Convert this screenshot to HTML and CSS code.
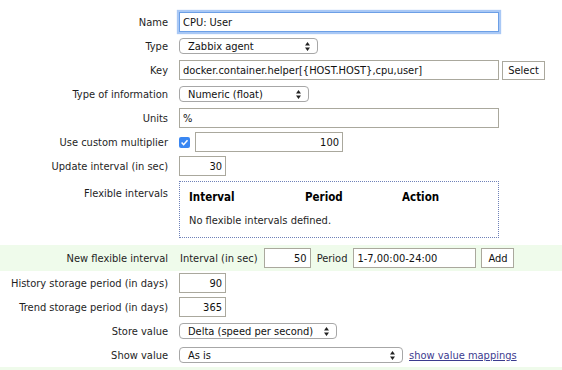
FILE: index.html
```html
<!DOCTYPE html>
<html>
<head>
<meta charset="utf-8">
<link rel="stylesheet" href="styles.css">
</head>
<body>
<div class="form">
  <div class="row">
    <div class="lbl">Name</div>
    <div class="ctl"><input class="inp w320 focus" value="CPU: User"></div>
  </div>
  <div class="row">
    <div class="lbl">Type</div>
    <div class="ctl"><div class="sel w139"><span>Zabbix agent</span><svg class="arr" width="5" height="9" viewBox="0 0 5 9"><path d="M2.5 0L5 3.5H0z M2.5 9L5 5.5H0z" fill="#222"/></svg></div></div>
  </div>
  <div class="row">
    <div class="lbl">Key</div>
    <div class="ctl"><input class="inp w320" value="docker.container.helper[{HOST.HOST},cpu,user]"><span class="btn btn-select">Select</span></div>
  </div>
  <div class="row">
    <div class="lbl">Type of information</div>
    <div class="ctl"><div class="sel w130"><span>Numeric (float)</span><svg class="arr" width="5" height="9" viewBox="0 0 5 9"><path d="M2.5 0L5 3.5H0z M2.5 9L5 5.5H0z" fill="#222"/></svg></div></div>
  </div>
  <div class="row">
    <div class="lbl">Units</div>
    <div class="ctl"><input class="inp w320" value="%"></div>
  </div>
  <div class="row">
    <div class="lbl">Use custom multiplier</div>
    <div class="ctl"><svg class="chk" width="11" height="11" viewBox="0 0 11 11"><rect x="0" y="0" width="11" height="11" rx="2" fill="#3a87f2"/><path d="M2.6 5.6L4.6 7.7L8.5 3.2" fill="none" stroke="#fff" stroke-width="1.5"/></svg><input class="inp w148 num" value="100"></div>
  </div>
  <div class="row">
    <div class="lbl">Update interval (in sec)</div>
    <div class="ctl"><input class="inp w47 num" value="30"></div>
  </div>
  <div class="row row-flex">
    <div class="lbl lbl-top">Flexible intervals</div>
    <div class="ctl">
      <div class="flexbox">
        <div class="fhead"><span class="h1">Interval</span><span class="h2">Period</span><span class="h3">Action</span></div>
        <div class="fmsg">No flexible intervals defined.</div>
      </div>
    </div>
  </div>
  <div class="row row-new">
    <div class="lbl">New flexible interval</div>
    <div class="ctl"><span class="txt t-int">Interval (in sec)</span><input class="inp w47 num" value="50"><span class="txt t-per">Period</span><input class="inp w123" value="1-7,00:00-24:00"><span class="btn btn-add">Add</span></div>
  </div>
  <div class="row">
    <div class="lbl">History storage period (in days)</div>
    <div class="ctl"><input class="inp w47 num" value="90"></div>
  </div>
  <div class="row">
    <div class="lbl">Trend storage period (in days)</div>
    <div class="ctl"><input class="inp w47 num" value="365"></div>
  </div>
  <div class="row">
    <div class="lbl">Store value</div>
    <div class="ctl"><div class="sel w158"><span>Delta (speed per second)</span><svg class="arr" width="5" height="9" viewBox="0 0 5 9"><path d="M2.5 0L5 3.5H0z M2.5 9L5 5.5H0z" fill="#222"/></svg></div></div>
  </div>
  <div class="row">
    <div class="lbl">Show value</div>
    <div class="ctl"><div class="sel w224"><span>As is</span><svg class="arr" width="5" height="9" viewBox="0 0 5 9"><path d="M2.5 0L5 3.5H0z M2.5 9L5 5.5H0z" fill="#222"/></svg></div><a class="link" href="#">show value mappings</a></div>
  </div>
  <div class="row row-new row-tail"></div>
</div>
</body>
</html>
```
FILE: styles.css
```css
html, body {
  margin: 0;
  padding: 0;
  background: #fff;
}
body {
  font-family: "DejaVu Sans Condensed", "DejaVu Sans", sans-serif;
  font-size: 11px;
  color: #1e1e1e;
}
.form {
  padding-top: 10px;
}
.row {
  display: grid;
  grid-template-columns: 168px 1fr;
  column-gap: 11px;
  align-items: center;
  height: 24px;
}
.lbl {
  text-align: right;
  white-space: nowrap;
}
.ctl {
  display: flex;
  align-items: center;
}
.inp {
  box-sizing: border-box;
  height: 20px;
  border: 1px solid #aaa89d;
  padding: 0 3px;
  font-family: inherit;
  font-size: 11px;
  color: #111;
  background: #fff;
  margin: 0;
  outline: none;
}
.num { text-align: right; }
.focus {
  border-color: #6c9fe6;
  box-shadow: 0 0 1px 2px #a9c8f5;
  height: 20px;
}
.w320 { width: 320px; }
.w148 { width: 148px; }
.w47 { width: 47px; }
.w123 { width: 123px; }
.w139 { width: 139px; }
.w130 { width: 130px; }
.w158 { width: 158px; }
.w224 { width: 224px; }
.sel {
  box-sizing: border-box;
  height: 16px;
  border: 1px solid #a7a7a7;
  border-radius: 4px;
  padding: 0 7px 0 8px;
  display: flex;
  align-items: center;
  justify-content: space-between;
  background: #fff;
  color: #111;
}
.btn {
  box-sizing: border-box;
  height: 19px;
  border: 1px solid #aaa89d;
  background: #fff;
  display: inline-flex;
  align-items: center;
  justify-content: center;
  color: #111;
}
.btn-select { width: 43px; margin-left: 3px; }
.btn-add { width: 33px; margin-left: 5px; height: 20px; }
.chk { margin-right: 5px; }
.row-flex {
  height: auto;
  align-items: start;
  padding: 3px 0 3px;
}
.lbl-top { padding-top: 6px; }
.flexbox {
  box-sizing: border-box;
  width: 320px;
  height: 57px;
  border: 1px dotted #6f81b8;
  padding: 8px 0 0 9px;
}
.fhead {
  display: flex;
  font-weight: bold;
  font-size: 11.5px;
  color: #000;
}
.h1 { width: 116px; }
.h2 { width: 97px; }
.fmsg {
  margin-top: 10px;
}
.row-new {
  background: #effbeb;
  height: 26px;
  margin-top: 4px;
}
.row-tail { margin-top: 0; }
.t-int { margin-left: 1px; margin-right: 6px; }
.t-per { margin-left: 6px; margin-right: 6px; }
.link {
  margin-left: 6px;
  color: #3c3b8f;
  text-decoration: underline;
}
```
